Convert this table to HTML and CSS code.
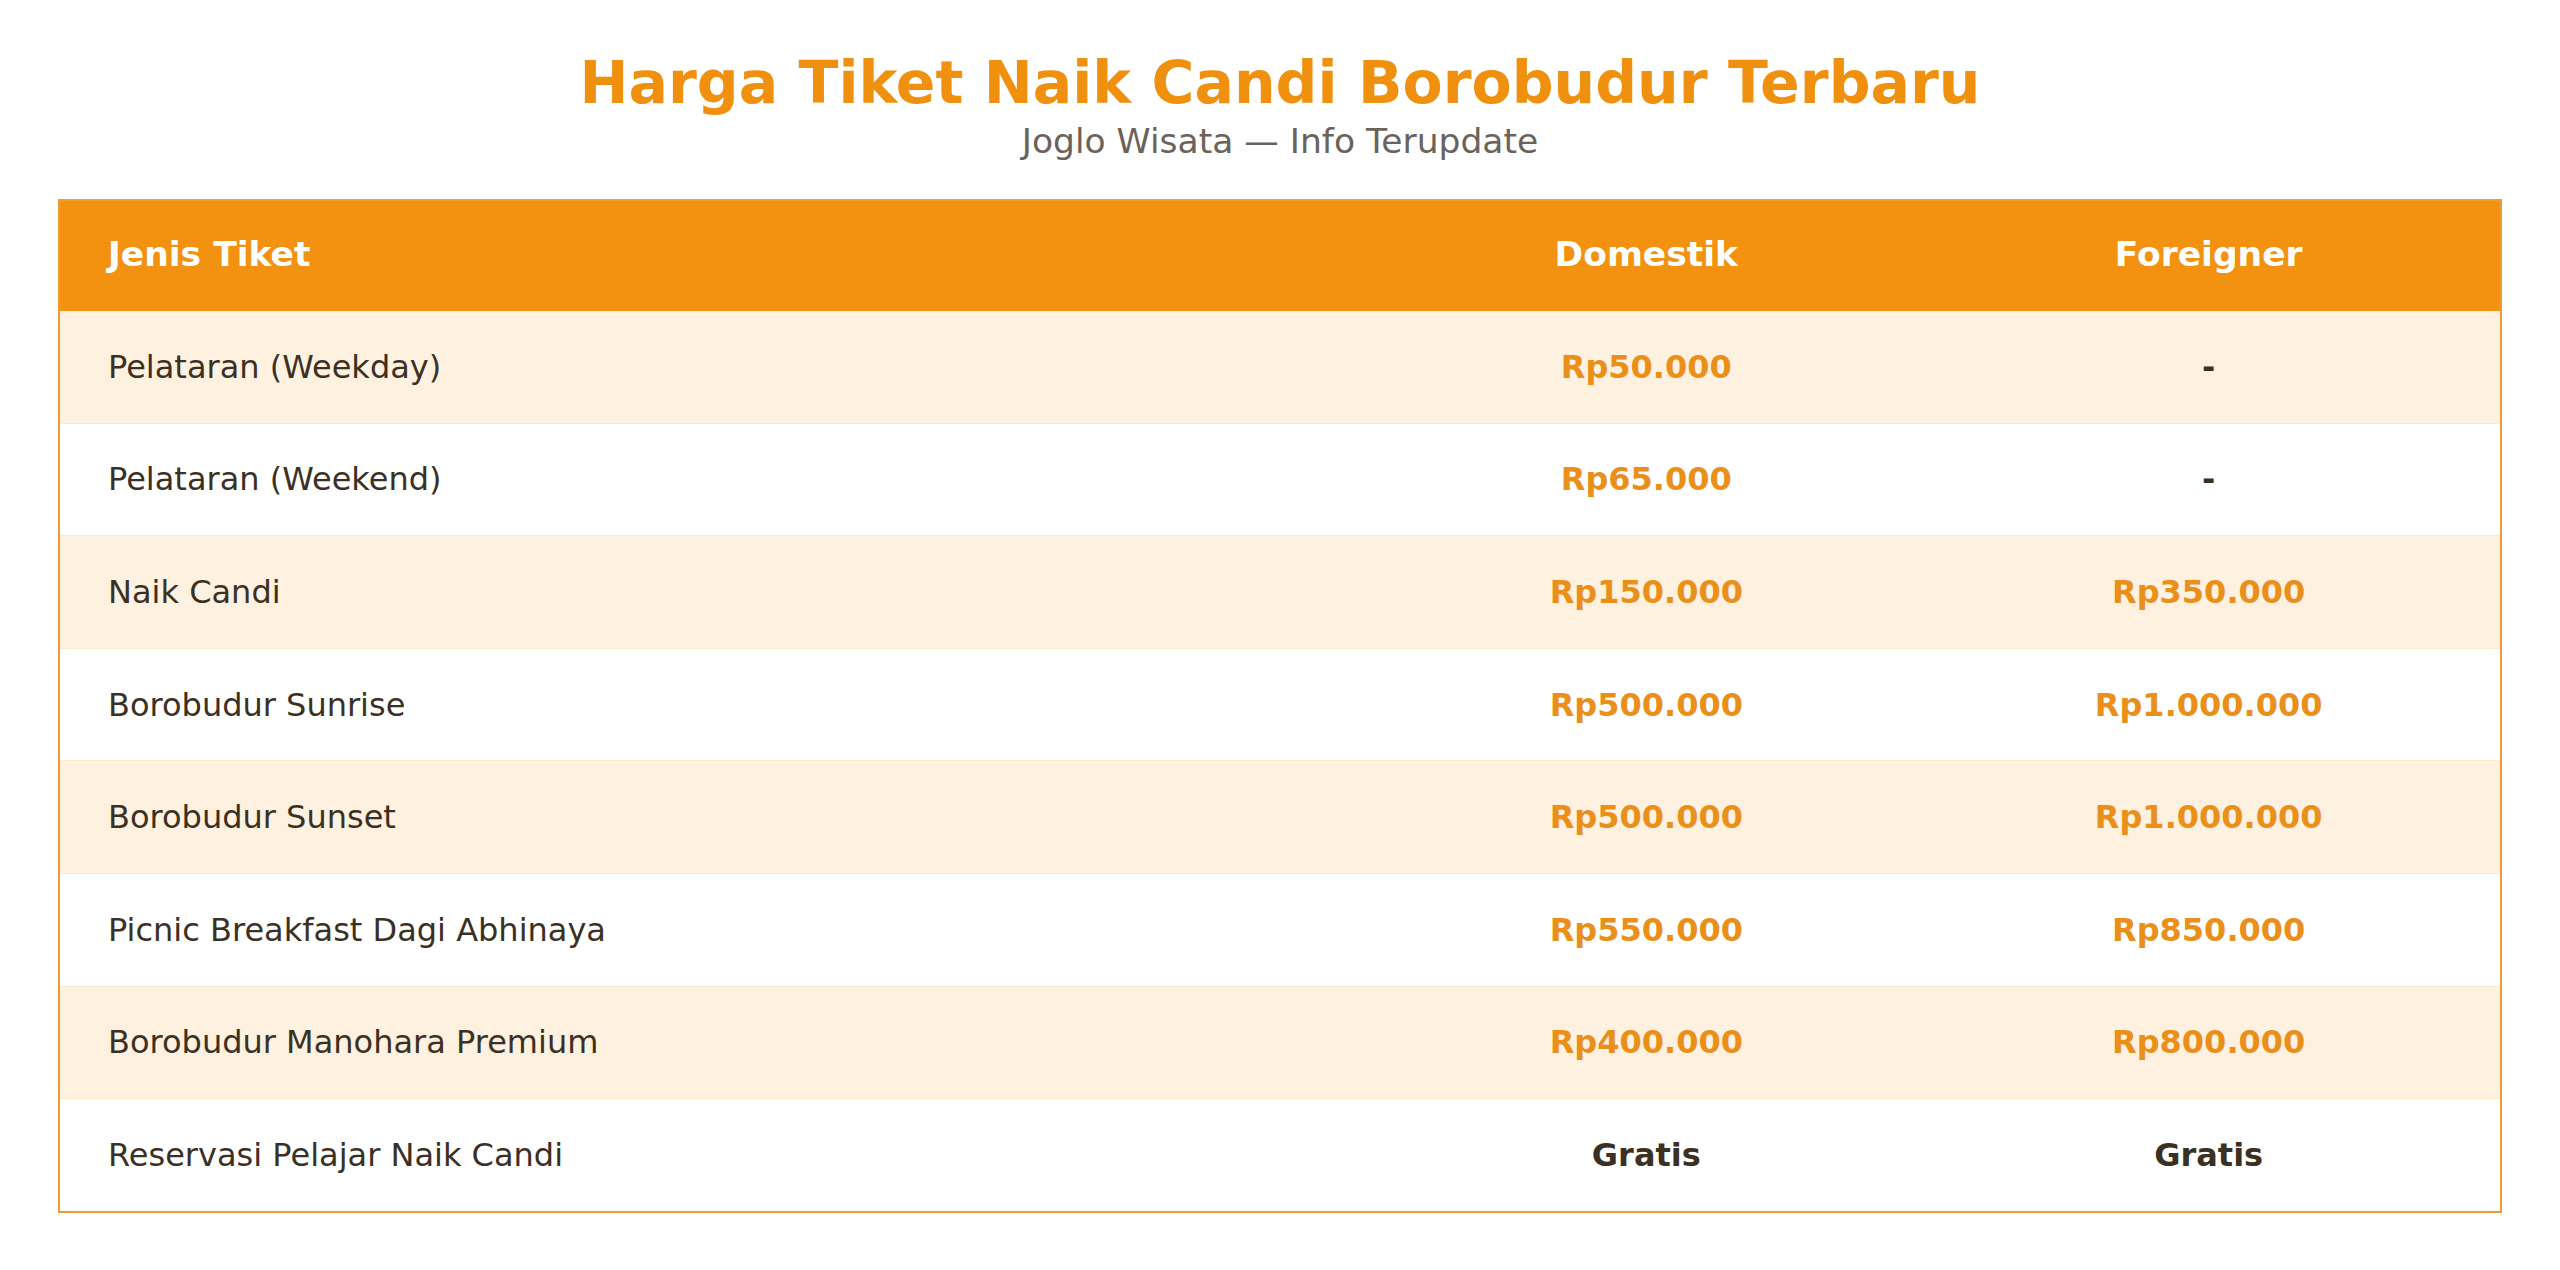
FILE: index.html
```html
<!DOCTYPE html>
<html lang="id">
<head>
<meta charset="utf-8">
<title>Harga Tiket Naik Candi Borobudur Terbaru</title>
<link rel="stylesheet" href="styles.css">
</head>
<body>
<main class="page">
  <header class="page-head">
    <h1 class="title">Harga Tiket Naik Candi Borobudur Terbaru</h1>
    <p class="subtitle">Joglo Wisata — Info Terupdate</p>
  </header>
  <table class="price-table">
    <colgroup>
      <col class="col-name">
      <col class="col-dom">
      <col class="col-for">
    </colgroup>
    <thead>
      <tr>
        <th class="cell-name">Jenis Tiket</th>
        <th>Domestik</th>
        <th>Foreigner</th>
      </tr>
    </thead>
    <tbody>
      <tr><td class="cell-name">Pelataran (Weekday)</td><td class="price">Rp50.000</td><td class="empty">-</td></tr>
      <tr><td class="cell-name">Pelataran (Weekend)</td><td class="price">Rp65.000</td><td class="empty">-</td></tr>
      <tr><td class="cell-name">Naik Candi</td><td class="price">Rp150.000</td><td class="price">Rp350.000</td></tr>
      <tr><td class="cell-name">Borobudur Sunrise</td><td class="price">Rp500.000</td><td class="price">Rp1.000.000</td></tr>
      <tr><td class="cell-name">Borobudur Sunset</td><td class="price">Rp500.000</td><td class="price">Rp1.000.000</td></tr>
      <tr><td class="cell-name">Picnic Breakfast Dagi Abhinaya</td><td class="price">Rp550.000</td><td class="price">Rp850.000</td></tr>
      <tr><td class="cell-name">Borobudur Manohara Premium</td><td class="price">Rp400.000</td><td class="price">Rp800.000</td></tr>
      <tr><td class="cell-name">Reservasi Pelajar Naik Candi</td><td class="free">Gratis</td><td class="free">Gratis</td></tr>
    </tbody>
  </table>
</main>
</body>
</html>
```
FILE: styles.css
```css
html, body {
  margin: 0;
  padding: 0;
  background: #ffffff;
}

body {
  font-family: "DejaVu Sans", "Liberation Sans", sans-serif;
  color: #3b3024;
}

.page {
  padding: 50px 58px 0 58px;
}

.page-head {
  text-align: center;
  margin-bottom: 38px;
}

.title {
  margin: 0;
  font-size: 58.5px;
  line-height: 66px;
  font-weight: bold;
  color: #f0900f;
}

.subtitle {
  margin: 5px 0 0 0;
  font-size: 34.5px;
  line-height: 40px;
  color: #6b635b;
}

.price-table {
  width: 100%;
  border-collapse: collapse;
  table-layout: fixed;
  border: 2px solid #ef9c30;
}

.col-name { width: 53.9%; }
.col-dom { width: 22.2%; }
.col-for { width: 23.9%; }

.price-table th {
  background: #f39110;
  color: #ffffff;
  font-size: 34.5px;
  font-weight: bold;
  height: 106px;
  padding: 0 0 4px 0;
  text-align: center;
  vertical-align: middle;
}

.price-table td {
  height: 111.6px;
  padding: 0;
  font-size: 32px;
  text-align: center;
  vertical-align: middle;
  border-bottom: 1px solid #fde8cc;
}

.price-table tbody tr:nth-child(odd) td {
  background: #fef1df;
}

.price-table tbody tr:last-child td {
  border-bottom: none;
}

.price-table .cell-name {
  text-align: left;
  padding-left: 48px;
}

.price {
  color: #ea8f1a;
  font-weight: bold;
}

.free,
.empty {
  color: #3b3024;
  font-weight: bold;
}
```
